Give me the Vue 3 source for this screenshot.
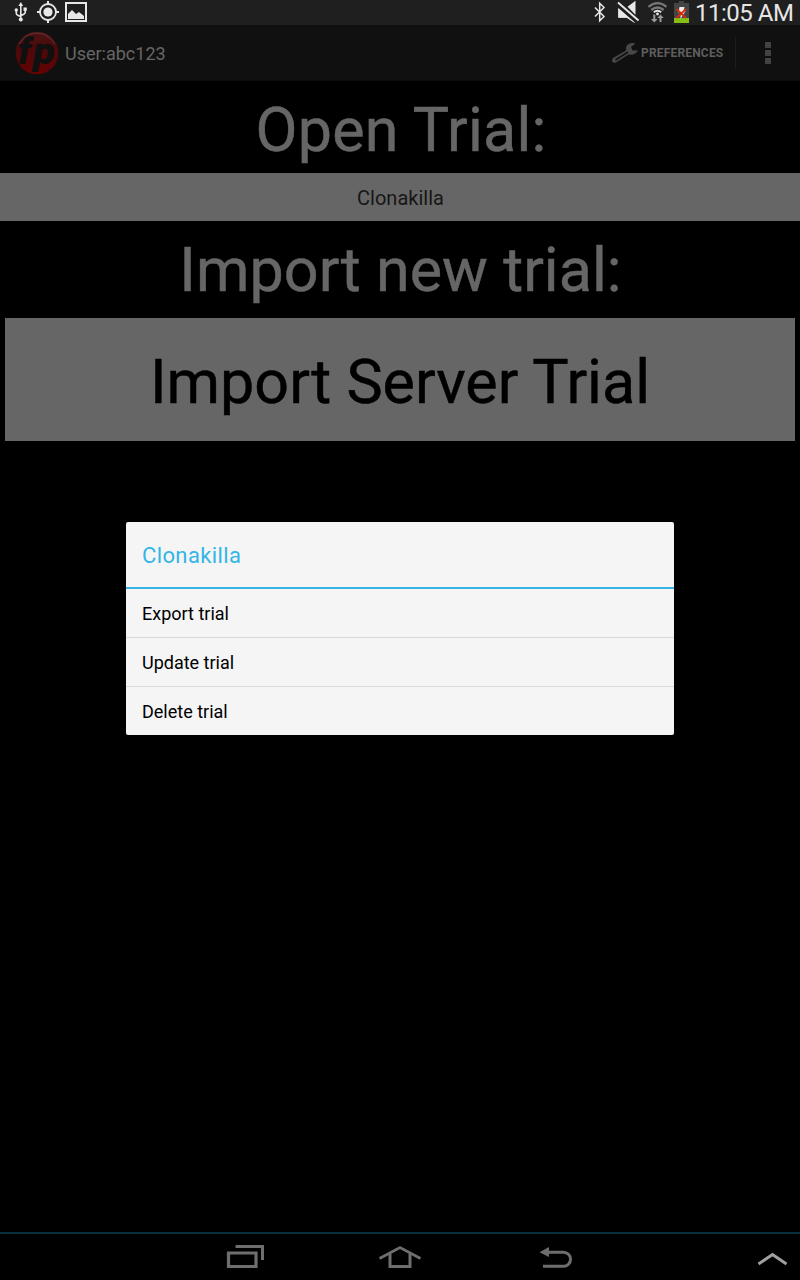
<script setup>
const actions = ['Export trial', 'Update trial', 'Delete trial']
</script>

<template>
  <div class="screen">
    <header class="status">
      <svg class="status-left" width="100" height="25" viewBox="0 0 100 25">
        <g fill="none" stroke="#e8e8e8" stroke-width="1.6">
          <path d="M20.800 4V19M16.300 11v2.500q0 1.500 4.500 3M25.200 10v2.500q0 1.500-4.400 3" />
          <circle cx="48" cy="12" r="8" stroke-width="1.8" />
          <path d="M48 1v4M48 19v4M37 12h4M55 12h4" stroke-width="2" />
          <path d="M66 3H86V21H66Z" stroke-width="2" />
        </g>
        <g fill="#e8e8e8">
          <path d="M20.800 2l2.400 4h-4.800z" />
          <circle cx="20.8" cy="19.5" r="2" />
          <circle cx="16.3" cy="10" r="1.7" />
          <path d="M23.500 7.500h3.300v3.300h-3.300z" />
          <circle cx="48" cy="12" r="4.6" />
          <path d="M68 19v-5l4-4 4 4 3-2 5 4v3z" />
        </g>
      </svg>
      <div class="status-right">
        <svg width="102" height="25" viewBox="592 0 102 25">
          <path d="M595 7.500l9 9-4.300 4.200V3.300L604 7.500l-9 9" fill="none" stroke="#e8e8e8" stroke-width="1.5" />
          <path d="M618.500 8.500L634.500 22.500 626.500 17.500H618.500ZM627.500 6.800l8-6v14z" fill="#e8e8e8" />
          <path d="M618.500 8.500V17.500H627L634.500 22.500Z" fill="#e8e8e8" stroke="#e8e8e8" stroke-width=".6" />
          <path d="M618 2.500l20.500 18" stroke="#e8e8e8" stroke-width="1.900" />
          <g fill="none">
            <path d="M648.500 6.800Q657.500-.5 666.500 6.800M651.300 10Q657.500 5 663.700 10" stroke="#777" stroke-width="2.300" />
            <path d="M653.800 12.300Q657.500 9.300 661.200 12.300" stroke="#e8e8e8" stroke-width="1.800" />
          </g>
          <circle cx="657.5" cy="14" r="1.400" fill="#e8e8e8" />
          <path d="M653.300 14.500h2v4.500h2.300l-3.300 3.500-3.300-3.500h2.300zM659.500 22v-4h-2.200l3.200-3.500 3.200 3.500h-2.200v4z" fill="#999" />
          <path d="M679 1h5v2h5v20h-15V3h5z" fill="#444" />
          <path d="M674 18h15v5h-15z" fill="#84bd16" />
          <path d="M679.500 7h5l-1 4h2l-5 8v-6h-2z" fill="#eee" />
          <path d="M676.500 9l9.500 9M686 9l-9.500 9" stroke="#d42b0d" stroke-width="1.800" />
        </svg>
        <span class="clock">11:05 AM</span>
      </div>
    </header>

    <nav class="bar">
      <svg class="logo" width="44" height="44" viewBox="0 0 44 44">
        <defs>
          <linearGradient id="red" x1="0" y1="0" x2="0" y2="1">
            <stop offset="0" stop-color="#4c1516" />
            <stop offset=".35" stop-color="#4a0a0b" />
            <stop offset="1" stop-color="#640203" />
          </linearGradient>
        </defs>
        <circle cx="22" cy="22" r="21.3" fill="url(#red)" />
        <path d="M4 13Q11 2 22 2t18 11" fill="none" stroke="#633233" stroke-width="1" />
        <text class="logo-text" x="3" y="32.500" textLength="13" lengthAdjust="spacingAndGlyphs">f</text>
        <text class="logo-text" x="18" y="32.500" textLength="22" lengthAdjust="spacingAndGlyphs">p</text>
      </svg>
      <span class="user">User:abc123</span>
      <svg class="wrench" width="28" height="22" viewBox="0 0 28 22">
        <path d="M2 16L15 8.500Q14 1.500 21 1L24.500 1.500 20 5 21.500 8.500 27 8.500Q24.500 13.500 17.500 12.500L5 20.500Q1 21.500 1 18Z" fill="#484848" />
        <path d="M4.500 18L17 10" stroke="#141414" stroke-width="1.900" />
      </svg>
      <span class="pref">PREFERENCES</span>
      <span class="divider"></span>
      <span class="dots"><i></i><i></i><i></i></span>
    </nav>

    <main>
      <h1 class="open"><span>Open Trial:</span></h1>
      <div class="trial"><span>Clonakilla</span></div>
      <h1 class="import"><span>Import new trial:</span></h1>
      <button class="server"><span>Import Server Trial</span></button>
    </main>

    <section class="dialog">
      <h2><span>Clonakilla</span></h2>
      <div v-for="a in actions" :key="a" class="item"><span>{{ a }}</span></div>
    </section>

    <footer>
      <svg width="800" height="46" viewBox="0 1234 800 46" fill="none" stroke="#6e6e6e">
        <path d="M228.500 1253H256V1266.500H228.500Z" stroke-width="3.200" />
        <path d="M235.500 1246.500H262.500V1260" stroke-width="3" />
        <path d="M379.500 1258.500L400 1247.500 420.500 1258.500" stroke-width="2.800" />
        <path d="M390 1253.500V1266.500H410V1253.500" stroke-width="3" />
        <path d="M547 1252.200H563.500A7 7 0 0 1 563.500 1266.300H543" stroke-width="3" />
        <path d="M539.500 1252.200L549 1247V1257Z" fill="#6e6e6e" stroke="none" />
        <path d="M758.500 1264L772.500 1254.500 786.500 1264" stroke="#a0a0a0" stroke-width="3" />
      </svg>
    </footer>
  </div>
</template>

<style>
body { margin: 0; background: #000; }
</style>

<style scoped>
.screen { position: relative; display: flex; flex-direction: column; width: 800px; height: 1280px; overflow: hidden; background: #000; font-family: Roboto, "Noto Sans", sans-serif; }
span { white-space: nowrap; }
.status { display: flex; justify-content: space-between; height: 25px; background: #1f1f1f; }
.status svg { display: block; }
.status-right { display: flex; }
.clock { width: 106px; box-sizing: border-box; padding-left: 1px; color: #e6e6e6; font-size: 24px; line-height: 26px; letter-spacing: -0.5px; }
.bar { display: flex; align-items: center; height: 56px; box-sizing: border-box; background: #101010; border-bottom: 1px solid #0c0c0c; }
.logo { margin-left: 15px; overflow: visible; }
.logo-text { font-family: Roboto, sans-serif; font-size: 36px; font-weight: 900; font-style: italic; fill: #101010; }
.user { width: 110px; margin-left: 6px; padding-top: 2px; color: #666; font-size: 18px; line-height: 24px; }
.wrench { margin-left: 436px; }
.pref { width: 84px; margin-left: 2px; color: #5e5e5e; font-size: 12px; font-weight: 700; line-height: 16px; letter-spacing: 0.18px; }
.divider { width: 1px; height: 32px; margin-left: 10px; background: #1d1d1d; }
.dots { display: flex; flex-direction: column; gap: 2px; margin-left: 29px; }
.dots i { width: 6px; height: 6px; background: #434343; }
main { flex: 1; }
h1 { margin: 0; box-sizing: border-box; text-align: center; color: #666; font-size: 61px; font-weight: 400; -webkit-text-stroke: 0.5px #666; }
.open { height: 92px; padding-top: 3px; padding-left: 2px; line-height: 92px; letter-spacing: 0.2px; }
.trial { height: 48px; padding-left: 1px; background: #666; color: #161616; font-size: 20px; line-height: 50px; text-align: center; }
.import { height: 97px; padding-left: 1px; line-height: 98px; letter-spacing: 0.04px; }
.server { display: block; width: 790px; height: 123px; margin: 0 5px; padding: 6px 0 0; border: 0; background: #666; color: #000; font-family: inherit; font-size: 61px; line-height: 117px; text-align: center; -webkit-text-stroke: 0.5px #000; }
.dialog { position: absolute; left: 126px; top: 522px; width: 548px; height: 213px; overflow: hidden; border-radius: 2px; background: #f5f5f5; }
h2 { height: 67px; margin: 0; padding-left: 16px; box-sizing: border-box; border-bottom: 2px solid #33b5e5; color: #33b5e5; font-size: 22px; font-weight: 400; line-height: 67px; letter-spacing: 0.38px; }
.item { height: 49px; padding-left: 16px; box-sizing: border-box; border-bottom: 1px solid #d9d9d9; color: #000; font-size: 18px; line-height: 50px; }
.item:last-child { height: 48px; border-bottom: 0; }
footer { height: 46px; border-top: 2px solid #082f3f; }
footer svg { display: block; }
</style>
